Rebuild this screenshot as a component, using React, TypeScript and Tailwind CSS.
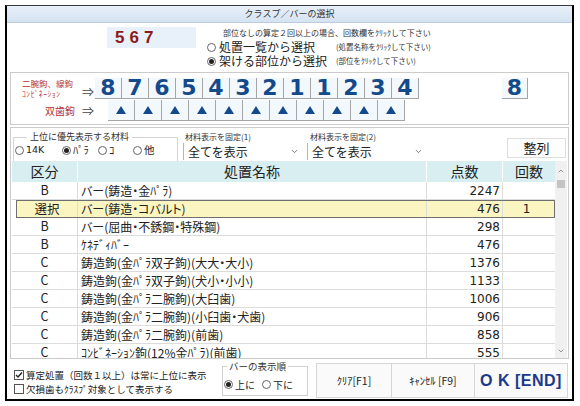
import { ChevronDown, ChevronUp } from "lucide-react";

type Row = {
  kubun: string;
  name: string;
  ten: number;
  kai?: string;
  selected?: boolean;
};

const teeth = ["8", "7", "6", "5", "4", "3", "2", "1", "1", "2", "3", "4"];

const rows: Row[] = [
  { kubun: "B", name: "バー(鋳造・金ﾊﾟﾗ)", ten: 2247 },
  { kubun: "選択", name: "バー(鋳造・コバルト)", ten: 476, kai: "1", selected: true },
  { kubun: "B", name: "バー(屈曲・不銹鋼・特殊鋼)", ten: 298 },
  { kubun: "B", name: "ｹﾈﾃﾞｨﾊﾞｰ", ten: 476 },
  { kubun: "C", name: "鋳造鉤(金ﾊﾟﾗ双子鉤)(大大・大小)", ten: 1376 },
  { kubun: "C", name: "鋳造鉤(金ﾊﾟﾗ双子鉤)(犬小・小小)", ten: 1133 },
  { kubun: "C", name: "鋳造鉤(金ﾊﾟﾗ二腕鉤)(大臼歯)", ten: 1006 },
  { kubun: "C", name: "鋳造鉤(金ﾊﾟﾗ二腕鉤)(小臼歯・犬歯)", ten: 906 },
  { kubun: "C", name: "鋳造鉤(金ﾊﾟﾗ二腕鉤)(前歯)", ten: 858 },
  { kubun: "C", name: "ｺﾝﾋﾞﾈｰｼｮﾝ鉤(12%金ﾊﾟﾗ)(前歯)", ten: 555 },
];

function Radio({ checked }: { checked?: boolean }) {
  return (
    <span className="inline-flex w-[9px] h-[9px] shrink-0 items-center justify-center rounded-full border border-[#666] bg-white">
      {checked && <span className="w-[5px] h-[5px] rounded-full bg-[#222]" />}
    </span>
  );
}

function Check({ checked }: { checked?: boolean }) {
  return (
    <span className="inline-flex w-[10px] h-[10px] shrink-0 items-center justify-center border border-[#555] bg-white">
      {checked && (
        <svg width="8" height="8" viewBox="0 0 8 8">
          <path d="M1 4 L3 6 L7 1.5" stroke="#222" strokeWidth="1.4" fill="none" />
        </svg>
      )}
    </span>
  );
}

function Tri() {
  return (
    <svg width="10" height="8" viewBox="0 0 10 8">
      <polygon points="5,0 10,8 0,8" fill="#134a8b" />
    </svg>
  );
}

export default function App() {
  return (
    <div className="w-[580px] h-[406px] bg-white pt-[5px] pl-[5px] font-['Noto_Sans_CJK_JP',sans-serif] text-[#222]">
      <div className="w-[569px] h-[396px] flex flex-col border-t border-t-[#3a3a3a] border-x-2 border-b-2 border-black bg-white">
        {/* title bar */}
        <div className="h-[17px] shrink-0 bg-linear-to-b from-[#e8f0f9] to-[#d5e3f2] border-b border-[#bccbdb] flex items-center justify-center text-[9px] text-[#333]">
          クラスプ／バーの選択
        </div>

        {/* top */}
        <div className="h-[49px] shrink-0 flex pl-[100px] pt-[4px]">
          <div className="w-[89px] h-[21px] bg-[#e8f0fa] flex items-center pl-[8px] text-[17px] font-bold text-[#8b1a1a] tracking-[5px] font-['Liberation_Sans',sans-serif]">
            567
          </div>
          <div className="ml-[11px] flex flex-col">
            <div className="pl-[16px] text-[8px] leading-[11px] text-[#333]">
              部位なしの算定２回以上の場合、回数欄をｸﾘｯｸして下さい
            </div>
            <div className="flex items-center h-[14px] mt-[2px]">
              <Radio />
              <span className="w-[120px] pl-[3px] text-[12px] leading-none">処置一覧から選択</span>
              <span className="text-[7.5px] text-[#333]">(処置名称をｸﾘｯｸして下さい)</span>
            </div>
            <div className="flex items-center h-[14px]">
              <Radio checked />
              <span className="w-[120px] pl-[3px] text-[12px] leading-none">架ける部位から選択</span>
              <span className="text-[7.5px] text-[#333]">(部位をｸﾘｯｸして下さい)</span>
            </div>
          </div>
        </div>

        {/* tooth panel */}
        <div className="mx-[3px] h-[53px] shrink-0 border border-[#cbcbcb] flex flex-col pt-[5px]">
          <div className="flex h-[21px]">
            <div className="w-[84px] flex items-center pl-[11px]">
              <div className="flex flex-col text-[#b33434] leading-[10px] w-[60px]">
                <span className="text-[8.5px]">二腕鉤、線鉤</span>
                <span className="text-[7.5px] tracking-[0.6px] mt-[1px]">ｺﾝﾋﾞﾈｰｼｮﾝ</span>
              </div>
              <span className="text-[12px] text-[#444] mt-[6px]">⇒</span>
            </div>
            {teeth.map((t, i) => (
              <div
                key={i}
                className="w-[27px] h-[21px] bg-[#f3f8fc] border-r border-b border-[#a5a5a5] flex items-center justify-center text-[22px] leading-none font-bold text-[#134a8b] font-['DejaVu_Sans',sans-serif]"
              >
                {t}
              </div>
            ))}
            <div className="ml-[83px] w-[26px] h-[21px] bg-[#f3f8fc] border-r border-b border-[#a5a5a5] flex items-center justify-center text-[22px] leading-none font-bold text-[#134a8b] font-['DejaVu_Sans',sans-serif]">
              8
            </div>
          </div>
          <div className="flex h-[21px] mt-[1px]">
            <div className="w-[84px] flex items-center pl-[34px]">
              <span className="text-[10px] text-[#b33434] w-[37px]">双歯鉤</span>
              <span className="text-[12px] text-[#444]">⇒</span>
            </div>
            <div className="flex ml-[13px]">
              {Array.from({ length: 11 }).map((_, i) => (
                <div
                  key={i}
                  className="w-[27px] h-[21px] bg-[#f3f8fc] border-r border-b border-[#a5a5a5] flex items-center justify-center"
                >
                  <Tri />
                </div>
              ))}
            </div>
          </div>
        </div>

        {/* main box */}
        <div className="mx-[3px] mt-[2px] h-[232px] shrink-0 border border-[#cbcbcb] flex flex-col">
          <div className="h-[33px] shrink-0 flex">
            <fieldset className="ml-[2px] mt-[4px] w-[165px] h-[29px] border-x border-t border-[#d4d4d4]">
              <legend className="ml-[13px] px-[3px] text-[9px] leading-[10px] text-[#333]">
                上位に優先表示する材料
              </legend>
              <div className="flex items-center h-[14px] pl-[1px] mt-[1px] text-[10.5px] leading-none">
                <div className="w-[47px] flex items-center gap-[2px]">
                  <Radio />
                  <span className="font-['DejaVu_Sans',sans-serif] text-[9.5px]">14K</span>
                </div>
                <div className="w-[36px] flex items-center gap-[2px]">
                  <Radio checked />
                  <span>ﾊﾟﾗ</span>
                </div>
                <div className="w-[35px] flex items-center gap-[2px]">
                  <Radio />
                  <span>ｺ</span>
                </div>
                <div className="flex items-center gap-[2px]">
                  <Radio />
                  <span>他</span>
                </div>
              </div>
            </fieldset>
            <div className="ml-[5px] w-[119px] flex flex-col">
              <span className="pl-[2px] mt-[4px] text-[8px] leading-[10px] text-[#333]">材料表示を固定(1)</span>
              <div className="mt-[1px] h-[17px] border-l border-[#b5b5b5] flex items-center justify-between pl-[4px] pr-[3px] text-[12px]">
                <span>全てを表示</span>
                <ChevronDown size={9} color="#555" />
              </div>
            </div>
            <div className="ml-[5px] w-[119px] flex flex-col">
              <span className="pl-[3px] mt-[4px] text-[8px] leading-[10px] text-[#333]">材料表示を固定(2)</span>
              <div className="mt-[1px] h-[17px] border-l border-[#b5b5b5] flex items-center justify-between pl-[4px] pr-[3px] text-[12px]">
                <span>全てを表示</span>
                <ChevronDown size={9} color="#555" />
              </div>
            </div>
            <div className="ml-[81px] mt-[10px] w-[59px] h-[20px] border border-[#dedede] bg-[#fdfdfd] flex items-center justify-center text-[13px]">
              整列
            </div>
          </div>

          {/* table */}
          <div className="mx-[1px] flex-1 flex overflow-hidden">
            <div className="flex-1 flex flex-col">
              <div className="flex h-[21px] shrink-0 bg-[#d8eef0] text-[14px]">
                <div className="w-[66px] border-r border-white flex items-center justify-center">区分</div>
                <div className="w-[349px] border-r border-white flex items-center justify-center">処置名称</div>
                <div className="w-[76px] border-r border-white flex items-center justify-center">点数</div>
                <div className="flex-1 flex items-center justify-center">回数</div>
              </div>
              {rows.map((r, i) => (
                <div
                  key={i}
                  className={
                    r.selected
                      ? "flex h-[18px] shrink-0 ml-[4px] bg-[#fbf5c1] border border-[#6f6f6f] text-[12.5px]"
                      : "flex h-[18px] shrink-0 border-b border-[#dcdcdc] text-[12.5px]"
                  }
                >
                  <div
                    className={
                      r.selected
                        ? "w-[61px] border-r border-[#dcdcdc] flex items-center justify-center"
                        : "w-[66px] border-r border-[#dcdcdc] flex items-center justify-center"
                    }
                  >
                    {r.kubun}
                  </div>
                  <div className="w-[349px] border-r border-[#dcdcdc] flex items-center pl-[3px] whitespace-nowrap text-[12px] [font-feature-settings:'palt']">
                    {r.name}
                  </div>
                  <div className="w-[76px] border-r border-[#dcdcdc] flex items-center justify-end pr-[2px] font-['DejaVu_Sans',sans-serif] text-[12px]">
                    {r.ten}
                  </div>
                  <div className="flex-1 flex items-center justify-center pr-[4px] font-['DejaVu_Sans',sans-serif] text-[12px]">
                    {r.kai ?? ""}
                  </div>
                </div>
              ))}
            </div>
            <div className="w-[12px] bg-[#f0f0f0] flex flex-col items-center">
              <div className="h-[19px] flex items-center">
                <ChevronUp size={8} color="#666" />
              </div>
              <div className="w-[8px] h-[8px] bg-[#c4c4c4]" />
              <div className="flex-1" />
              <div className="h-[14px] flex items-center">
                <ChevronDown size={8} color="#666" />
              </div>
            </div>
          </div>
        </div>

        {/* bottom bar */}
        <div className="flex-1 flex pl-[7px]">
          <div className="w-[208px] flex flex-col pt-[9px] text-[9.5px]">
            <div className="flex items-center h-[14px] gap-[2px]">
              <Check checked />
              <span>算定処置（回数１以上）は常に上位に表示</span>
            </div>
            <div className="flex items-center h-[14px] gap-[2px]">
              <Check />
              <span>欠損歯もｸﾗｽﾌﾟ対象として表示する</span>
            </div>
          </div>
          <fieldset className="mt-[2px] mb-[3px] w-[86px] border border-[#d0d0d0]">
            <legend className="ml-[4px] px-[2px] text-[9.5px] leading-[10px] text-[#333]">バーの表示順</legend>
            <div className="flex items-center h-[14px] mt-[6px] pl-[1px] text-[10px]">
              <div className="flex items-center gap-[2px] w-[38px]">
                <Radio checked />
                <span>上に</span>
              </div>
              <div className="flex items-center gap-[2px]">
                <Radio />
                <span>下に</span>
              </div>
            </div>
          </fieldset>
          <div className="ml-[8px] mt-[4px] mb-[1px] flex">
            <div className="w-[76px] border border-[#d6d6d6] bg-[#fafafa] flex items-center justify-center text-[10.5px]">
              ｸﾘｱ[F1]
            </div>
            <div className="w-[83px] border-y border-r border-[#d6d6d6] bg-[#fafafa] flex items-center justify-center text-[10.5px]">
              ｷｬﾝｾﾙ [F9]
            </div>
            <div className="w-[93px] border-y border-r border-[#d6d6d6] bg-[#fafafa] flex items-center justify-center text-[16px] font-bold text-[#1a3a8c] font-['Liberation_Sans',sans-serif] tracking-[0.5px]">
              O K [END]
            </div>
          </div>
        </div>
      </div>
    </div>
  );
}
